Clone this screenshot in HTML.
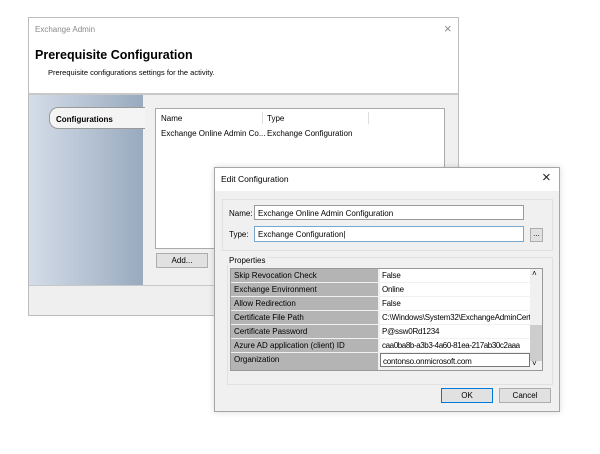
<!DOCTYPE html>
<html><head><style>
*{box-sizing:border-box;margin:0;padding:0}
body{width:600px;height:454px;background:#fff;position:relative;overflow:hidden;font-family:"Liberation Sans",sans-serif;font-size:8px;color:#000}
.a{position:absolute;white-space:nowrap}
.btn{position:absolute;background:#e1e1e1;border:1px solid #adadad;text-align:center;font-size:8px;line-height:13px}
.row{position:absolute;left:0;width:299px;height:14px}
.row .n{position:absolute;left:0;width:147px;height:13px;background:#b4b4b4;padding-left:3px;line-height:13px;white-space:nowrap;overflow:hidden}
.row .v{position:absolute;left:149px;width:150px;height:13px;background:#fff;padding-left:2px;line-height:13px;white-space:nowrap;overflow:hidden;letter-spacing:-0.2px}
</style></head><body>
<!-- main window -->
<div class="a" style="left:28px;top:17px;width:431px;height:299px;border:1px solid #bdbdbd;background:#fff">
 <div class="a" style="left:6px;top:7px;color:#8a8a8a;font-size:8px">Exchange Admin</div>
 <div class="a" style="left:415px;top:3px;color:#8a8a8a;font-size:13px">×</div>
 <div class="a" style="left:6px;top:30px;font-size:12.5px;font-weight:bold">Prerequisite Configuration</div>
 <div class="a" style="left:19px;top:50px;font-size:7.5px">Prerequisite configurations settings for the activity.</div>
 <div class="a" style="left:0;top:75px;width:429px;height:2px;background:#c8c8c8"></div>
 <div class="a" style="left:0;top:77px;width:429px;height:190px;background:#f0f0f0"></div>
 <div class="a" style="left:0;top:77px;width:114px;height:190px;background:linear-gradient(90deg,#d4dde8,#99aabf)"></div>
 <div class="a" style="left:20px;top:89px;width:96px;height:22px;background:#f4f4f4;border:1px solid #9a9a9a;border-right:none;border-radius:9px 0 0 9px;font-weight:bold;padding:7px 0 0 6px">Configurations</div>
 <div class="a" style="left:126px;top:90px;width:290px;height:141px;background:#fff;border:1px solid #aaa">
  <div class="a" style="left:5px;top:5px">Name</div>
  <div class="a" style="left:106px;top:3px;width:1px;height:12px;background:#ddd"></div>
  <div class="a" style="left:111px;top:5px">Type</div>
  <div class="a" style="left:212px;top:3px;width:1px;height:12px;background:#ddd"></div>
  <div class="a" style="left:5px;top:20px">Exchange Online Admin Co...</div>
  <div class="a" style="left:111px;top:20px">Exchange Configuration</div>
 </div>
 <div class="btn" style="left:127px;top:235px;width:52px;height:15px">Add...</div>
 <div class="a" style="left:0;top:267px;width:429px;height:1px;background:#c8c8c8"></div>
 <div class="a" style="left:0;top:268px;width:429px;height:29px;background:#efefef"></div>
</div>
<!-- edit dialog -->
<div class="a" style="left:214px;top:167px;width:346px;height:245px;border:1px solid #a5a5a5;background:#f0f0f0;box-shadow:0 0 6px rgba(0,0,0,.15)">
 <div class="a" style="left:0;top:0;width:344px;height:23px;background:#fff"></div>
 <div class="a" style="left:6px;top:6px;font-size:8.5px">Edit Configuration</div>
 <div class="a" style="left:327px;top:1px;font-size:15px;color:#222">×</div>
 <div class="a" style="left:7px;top:31px;width:331px;height:52px;border:1px solid #e0e0e0"></div>
 <div class="a" style="left:14px;top:41px">Name:</div>
 <div class="a" style="left:39px;top:37px;width:270px;height:15px;background:#fff;border:1px solid #999;padding:3px 0 0 3px">Exchange Online Admin Configuration</div>
 <div class="a" style="left:14px;top:62px">Type:</div>
 <div class="a" style="left:39px;top:58px;width:270px;height:16px;background:#fff;border:1px solid #7aa8cc;padding:3px 0 0 3px">Exchange Configuration|</div>
 <div class="btn" style="left:315px;top:60px;width:13px;height:14px;line-height:10px">...</div>
 <div class="a" style="left:12px;top:89px;width:326px;height:128px;border:1px solid #e0e0e0"></div>
 <div class="a" style="left:12px;top:88px;background:#f0f0f0;padding:0 2px">Properties</div>
 <div class="a" style="left:15px;top:100px;width:313px;height:103px;border:1px solid #999;background:#f0f0f0">
  <div class="row" style="top:0"><div class="n">Skip Revocation Check</div><div class="v">False</div></div>
  <div class="row" style="top:14px"><div class="n">Exchange Environment</div><div class="v">Online</div></div>
  <div class="row" style="top:28px"><div class="n">Allow Redirection</div><div class="v">False</div></div>
  <div class="row" style="top:42px"><div class="n">Certificate File Path</div><div class="v">C:\Windows\System32\ExchangeAdminCert</div></div>
  <div class="row" style="top:56px"><div class="n">Certificate Password</div><div class="v">P@ssw0Rd1234</div></div>
  <div class="row" style="top:70px"><div class="n">Azure AD application (client) ID</div><div class="v" style="letter-spacing:-0.4px">caa0ba8b-a3b3-4a60-81ea-217ab30c2aaa</div></div>
  <div class="row" style="top:84px"><div class="n" style="height:17px">Organization</div><div class="v" style="border:1px solid #777;height:14px;padding-top:1px">contonso.onmicrosoft.com</div></div>
  <div class="a" style="left:299px;top:0;width:12px;height:101px;background:#f0f0f0"></div>
  <div class="a" style="left:299px;top:56px;width:12px;height:36px;background:#cdcdcd"></div>
  <div class="a" style="left:301px;top:0;font-size:8px">˄</div>
  <div class="a" style="left:301px;top:90px;font-size:8px">˅</div>
 </div>
 <div class="btn" style="left:226px;top:220px;width:52px;height:15px;border:1px solid #0078d7">OK</div>
 <div class="btn" style="left:284px;top:220px;width:52px;height:15px">Cancel</div>
</div>
</body></html>
